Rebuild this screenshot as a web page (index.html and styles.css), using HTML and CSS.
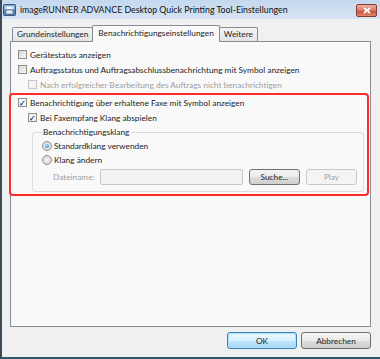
FILE: index.html
```html
<!DOCTYPE html>
<html lang="de">
<head>
  <meta charset="UTF-8">
  <title>imageRUNNER ADVANCE Desktop Quick Printing Tool-Einstellungen</title>
  <link rel="stylesheet" href="styles.css">
</head>
<body>

<div class="window">
  <div class="titlebar">
    <svg class="app-icon" width="13" height="12" viewBox="0 0 13 12">
      <rect x="0.5" y="0.5" width="12" height="11" rx="1" fill="#5d86b5" stroke="#34557d"/>
      <rect x="1.5" y="1.5" width="10" height="4" fill="#b9d3ec"/>
      <rect x="3" y="6" width="7" height="4" fill="#e8eef5" stroke="#4a6a90" stroke-width="0.7"/>
      <rect x="4" y="3" width="5" height="2" fill="#fff"/>
    </svg>
    <span class="title">imageRUNNER ADVANCE Desktop Quick Printing Tool-Einstellungen</span>
    <div class="close">
      <svg width="8" height="7" viewBox="0 0 8 7">
        <path d="M1 1 L7 6 M7 1 L1 6" stroke="#fff" stroke-width="1.8"/>
      </svg>
    </div>
  </div>

  <div class="content">
    <div class="tabs">
      <div class="tab">Grundeinstellungen</div>
      <div class="tab active">Benachrichtigungseinstellungen</div>
      <div class="tab">Weitere</div>
    </div>

    <div class="panel">
      <label class="check"><span class="box"></span>Gerätestatus anzeigen</label>
      <label class="check"><span class="box"></span>Auftragsstatus und Auftragsabschlussbenachrichtung mit Symbol anzeigen</label>
      <label class="check indent disabled"><span class="box"></span>Nach erfolgreicher Bearbeitung des Auftrags nicht benachrichtigen</label>

      <div class="highlight">
        <label class="check"><span class="box checked">&#10003;</span>Benachrichtigung über erhaltene Faxe mit Symbol anzeigen</label>
        <label class="check indent"><span class="box checked">&#10003;</span>Bei Faxempfang Klang abspielen</label>

        <fieldset class="group">
          <legend>Benachrichtigungsklang</legend>
          <label class="radio"><span class="dot on"></span>Standardklang verwenden</label>
          <label class="radio"><span class="dot"></span>Klang ändern</label>
          <div class="file-row">
            <span class="file-label">Dateiname:</span>
            <span class="file-input"></span>
            <button class="btn">Suche...</button>
            <button class="btn" disabled>Play</button>
          </div>
        </fieldset>
      </div>
    </div>

    <div class="footer">
      <button class="btn dlg default">OK</button>
      <button class="btn dlg">Abbrechen</button>
    </div>
  </div>
</div>

</body>
</html>
```

FILE: styles.css
```css
* {
  margin: 0;
  padding: 0;
  box-sizing: border-box;
}
body {
  font-family: Lato, "Noto Sans", sans-serif;
  font-size: 8.3px;
  color: #1e1e1e;
  background: #fff;
  width: 380px;
  height: 359px;
  overflow: hidden;
}
.window {
  width: 380px;
  height: 359px;
  border-left: 2px solid #3c4a58;
  border-bottom: 2px solid #2b5a6a;
  background: #f0f0f0;
  display: flex;
  flex-direction: column;
}
.titlebar {
  height: 19px;
  flex: none;
  display: flex;
  align-items: center;
  padding: 0 3px 0 1px;
  background: linear-gradient(#c4d8ee, #d6e4f2);
}
.app-icon {
  flex: none;
  margin-right: 4px;
}
.title {
  flex: 1;
  font-size: 8.8px;
  color: #111;
  white-space: nowrap;
}
.close {
  width: 21px;
  height: 13px;
  margin-top: 1px;
  border: 1px solid #8b3a2e;
  border-radius: 2px;
  background: linear-gradient(#eab0a2, #d77a64 50%, #c74a32 51%, #e0876f);
  display: flex;
  align-items: center;
  justify-content: center;
}
.content {
  flex: 1;
  display: flex;
  flex-direction: column;
  padding: 6px 9px 0 8px;
}
.tabs {
  display: flex;
  align-items: flex-end;
  height: 16px;
  padding-left: 2px;
  position: relative;
  z-index: 1;
}
.tab {
  height: 14px;
  padding: 0 4px;
  line-height: 13px;
  border: 1px solid #898c95;
  border-bottom: none;
  border-radius: 2px 2px 0 0;
  background: linear-gradient(#f4f4f4, #e4e4e4);
  white-space: nowrap;
}
.tab.active {
  height: 17px;
  line-height: 14px;
  background: #f9f9f9;
  padding: 0 5px;
  margin: 0 -1px -1px -1px;
  position: relative;
}
.panel {
  height: 286px;
  flex: none;
  background: #f9f9f9;
  border: 1px solid #898c95;
  padding: 5px 0 0 7px;
  display: flex;
  flex-direction: column;
}
.check,
.radio {
  display: flex;
  align-items: center;
  height: 15px;
  white-space: nowrap;
}
.box {
  flex: none;
  width: 9px;
  height: 9px;
  border: 1px solid #8e8f8f;
  background: linear-gradient(135deg, #d6d6d6, #f7f7f7);
  margin-right: 3px;
  display: flex;
  align-items: center;
  justify-content: center;
  font-size: 8px;
  font-weight: bold;
  color: #2b3f8a;
  line-height: 1;
}
.box.checked {
  background: #f4f4f4;
}
.indent {
  padding-left: 10px;
}
.disabled {
  color: #a0a0a0;
}
.disabled .box {
  border-color: #c6c6c6;
  background: #f4f4f4;
}
.highlight {
  margin: 1px 0 0 -9px;
  width: 360px;
  height: 103px;
  border: 2px solid #ff2a2a;
  border-radius: 4px;
  padding: 0 0 0 7px;
  display: flex;
  flex-direction: column;
}
.group {
  margin: 0 5px 0 14px;
  height: 67px;
  border: 1px solid #dcdcdc;
  border-radius: 3px;
  padding: 0 0 0 9px;
}
.group legend {
  padding: 0 2px;
  margin-left: -1px;
  line-height: 14px;
}
.radio {
  height: 14px;
}
.dot {
  flex: none;
  width: 10px;
  height: 10px;
  border-radius: 50%;
  border: 1px solid #8e8f8f;
  background: radial-gradient(#f4f4f4, #d0d0d0);
  margin-right: 2px;
  position: relative;
}
.dot.on::after {
  content: "";
  position: absolute;
  left: 2px;
  top: 2px;
  width: 4px;
  height: 4px;
  border-radius: 50%;
  background: radial-gradient(circle at 40% 35%, #9ee0ff, #1d7bc4);
}
.file-row {
  display: flex;
  align-items: center;
  margin-top: 2px;
  padding-left: 11px;
}
.file-label {
  color: #a0a0a0;
  width: 47px;
}
.file-input {
  width: 143px;
  height: 16px;
  border: 1px solid #c8c8c8;
  border-radius: 2px;
  background: #f2f2f2;
  margin-right: 6px;
}
.btn {
  font-family: inherit;
  font-size: 8.3px;
  width: 51px;
  height: 16px;
  border: 1px solid #707070;
  border-radius: 3px;
  background: linear-gradient(#f4f4f4, #ebebeb 50%, #dddddd 51%, #d0d0d0);
  color: #1e1e1e;
  margin-right: 6px;
}
.btn:disabled {
  border-color: #c8c8c8;
  background: #f4f4f4;
  color: #a0a0a0;
}
.footer {
  display: flex;
  justify-content: flex-end;
  padding: 5px 0 0 0;
}
.btn.dlg {
  width: 70px;
  height: 17px;
  margin-right: 0;
  margin-left: 4px;
}
.btn.default {
  border-color: #3c7fb1;
  background: linear-gradient(#eaf6fd, #d9f0fc 50%, #bee6fd 51%, #a7d9f5);
  box-shadow: inset 0 0 0 1px #aee0fa;
}
```
